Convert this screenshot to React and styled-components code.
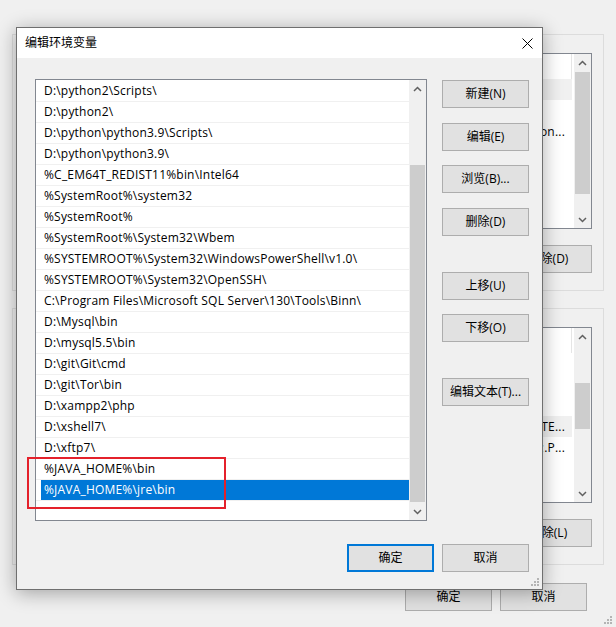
import React from 'react';
import styled, { createGlobalStyle } from 'styled-components';

const FONT = `"Open Sans", "Noto Sans CJK SC", sans-serif`;

const GlobalStyle = createGlobalStyle`
  html, body { margin: 0; padding: 0; }
  body { background: #f0f0f0; font-family: ${FONT}; font-size: 12px; color: #000; }
  * { box-sizing: border-box; }
`;

const Desktop = styled.div`
  position: relative;
  width: 616px;
  height: 627px;
  overflow: hidden;
  background: #f0f0f0;
`;

/* ---------- background window ---------- */
const BackWindow = styled.div`
  display: flex;
  flex-direction: column;
  height: 100%;
  padding: 34px 12px 0 12px;
`;

const Group = styled.div`
  height: 257px;
  border: 1px solid #dcdcdc;
  display: flex;
  flex-direction: column;
  align-items: flex-end;
  padding: 18px 11px 0 0;
  & + & { margin-top: 17px; }
`;

const ListBox = styled.div`
  display: flex;
  width: ${p => p.$w}px;
  height: ${p => p.$h}px;
  border: 1px solid #828790;
  background: #fff;
`;

const BackCols = styled.div`
  flex: 1;
  display: flex;
  flex-direction: column;
  min-width: 0;
`;

const BackHeader = styled.div`
  height: 25px;
  background: #fff;
  margin-right: 2px;
  border-right: 1px solid #e5e5e5;
`;

const BackRow = styled.div`
  height: 21px;
  line-height: 21px;
  padding-right: 7px;
  margin-right: 2px;
  text-align: right;
  white-space: nowrap;
  overflow: hidden;
  letter-spacing: 0.2px;
  background: ${p => (p.$sel ? '#f0f0f0' : '#fff')};
`;

const Button = styled.div`
  width: 87px;
  height: 28px;
  border: ${p => (p.$def ? '2px solid #0078d7' : '1px solid #adadad')};
  background: #e1e1e1;
  display: flex;
  align-items: center;
  justify-content: center;
  font-size: 12px;
  line-height: 1;
  flex-shrink: 0;
  margin-top: ${p => p.$mt || 0}px;
`;

const Footer = styled.div`
  display: flex;
  justify-content: flex-end;
  gap: 8px;
  padding: ${p => p.$pad};
`;

/* ---------- scrollbar ---------- */
const ScrollBar = styled.div`
  width: 17px;
  flex-shrink: 0;
  background: #f0f0f0;
  display: flex;
  flex-direction: column;
`;

const Arrow = styled.div`
  height: 17px;
  display: flex;
  align-items: center;
  justify-content: center;
  flex-shrink: 0;
`;

const Track = styled.div`
  flex: 1;
  display: flex;
  flex-direction: column;
`;

const Thumb = styled.div`
  margin: ${p => p.$top}px 1px 0 1px;
  height: ${p => p.$size}px;
  background: #cdcdcd;
`;

const Chevron = ({ down }) => (
  <svg width="9" height="6" viewBox="0 0 9 6">
    <path
      d={down ? 'M1 1 L4.5 4.5 L8 1' : 'M1 5 L4.5 1.5 L8 5'}
      fill="none"
      stroke="#606060"
      strokeWidth="1.5"
    />
  </svg>
);

const Scroll = ({ top, size }) => (
  <ScrollBar>
    <Arrow><Chevron /></Arrow>
    <Track><Thumb $top={top} $size={size} /></Track>
    <Arrow><Chevron down /></Arrow>
  </ScrollBar>
);

/* ---------- foreground dialog ---------- */
const Dialog = styled.div`
  position: absolute;
  left: 16px;
  top: 27px;
  width: 527px;
  height: 563px;
  border: 1px solid #6f6f6f;
  background: #f0f0f0;
  box-shadow: 0 3px 18px rgba(0, 0, 0, 0.33);
  display: flex;
  flex-direction: column;
`;

const TitleBar = styled.div`
  height: 30px;
  flex-shrink: 0;
  background: #fff;
  display: flex;
  align-items: center;
  justify-content: space-between;
  padding: 0 9px 0 8px;
`;

const Title = styled.span`
  font-size: 12px;
  line-height: 1;
`;

const Body = styled.div`
  display: flex;
  gap: 15px;
  padding: 21px 13px 0 18px;
`;

const Rows = styled.div`
  flex: 1;
  padding-top: 1px;
  min-width: 0;
`;

const Row = styled.div`
  height: 21px;
  line-height: 20px;
  border-bottom: 1px solid #f0f0f0;
  padding-left: 8px;
  white-space: nowrap;
  overflow: hidden;
  letter-spacing: 0.2px;
  color: ${p => (p.$sel ? '#fff' : '#000')};
  background: ${p => (p.$sel ? 'linear-gradient(to right, transparent 5px, #0078d7 5px)' : 'transparent')};
`;

const ButtonColumn = styled.div`
  display: flex;
  flex-direction: column;
  padding-top: 1px;
`;

const Marker = styled.div`
  position: absolute;
  left: 10px;
  top: 429px;
  width: 199px;
  height: 52px;
  border: 2px solid #e4212b;
  pointer-events: none;
`;

const GripBox = styled.div`
  position: absolute;
  right: ${p => p.$r}px;
  bottom: ${p => p.$b}px;
  width: 8px;
  height: 8px;
  line-height: 0;
`;

const Grip = ({ r, b }) => (
  <GripBox $r={r} $b={b}>
    <svg width="8" height="8" viewBox="0 0 8 8" fill="#b4b4b4">
      <rect x="6" y="0" width="2" height="2" />
      <rect x="3" y="3" width="2" height="2" />
      <rect x="6" y="3" width="2" height="2" />
      <rect x="0" y="6" width="2" height="2" />
      <rect x="3" y="6" width="2" height="2" />
      <rect x="6" y="6" width="2" height="2" />
    </svg>
  </GripBox>
);

const CloseIcon = () => (
  <svg width="11" height="11" viewBox="0 0 11 11">
    <path d="M0.5 0.5 L10.5 10.5 M10.5 0.5 L0.5 10.5" stroke="#000" strokeWidth="1" fill="none" />
  </svg>
);

const paths = [
  'D:\\python2\\Scripts\\',
  'D:\\python2\\',
  'D:\\python\\python3.9\\Scripts\\',
  'D:\\python\\python3.9\\',
  '%C_EM64T_REDIST11%bin\\Intel64',
  '%SystemRoot%\\system32',
  '%SystemRoot%',
  '%SystemRoot%\\System32\\Wbem',
  '%SYSTEMROOT%\\System32\\WindowsPowerShell\\v1.0\\',
  '%SYSTEMROOT%\\System32\\OpenSSH\\',
  'C:\\Program Files\\Microsoft SQL Server\\130\\Tools\\Binn\\',
  'D:\\Mysql\\bin',
  'D:\\mysql5.5\\bin',
  'D:\\git\\Git\\cmd',
  'D:\\git\\Tor\\bin',
  'D:\\xampp2\\php',
  'D:\\xshell7\\',
  'D:\\xftp7\\',
  '%JAVA_HOME%\\bin',
  '%JAVA_HOME%\\jre\\bin',
];

const userVars = [
  { v: '', sel: true },
  { v: '' },
  { v: 'D:\\python\\python3.9;C:\\Users\\Administrator\\AppData\\Local\\Programs\\Pyth on...' },
];

const sysVars = [
  { v: '' },
  { v: '' },
  { v: '' },
  { v: 'C:\\Windows\\System32\\Drivers\\DriverData;C:\\Windows\\Temp\\ROUTE...', sel: true },
  { v: '.COM;.EXE;.BAT;.CMD;.VBS;.VBE;.JS;.JSE;.WSF;.WSH;.MSC;.PY;.P...' },
];

export default function App() {
  return (
    <Desktop>
      <GlobalStyle />
      <BackWindow>
        <Group>
          <ListBox $w={560} $h={176}>
            <BackCols>
              <BackHeader />
              {userVars.map((r, i) => (
                <BackRow key={i} $sel={r.sel}>{r.v}</BackRow>
              ))}
            </BackCols>
            <Scroll top={1} size={122} />
          </ListBox>
          <Button $mt={16}>删除(D)</Button>
        </Group>
        <Group>
          <ListBox $w={560} $h={176}>
            <BackCols>
              <BackHeader />
              {sysVars.map((r, i) => (
                <BackRow key={i} $sel={r.sel}>{r.v}</BackRow>
              ))}
            </BackCols>
            <Scroll top={38} size={46} />
          </ListBox>
          <Button $mt={16}>删除(L)</Button>
        </Group>
        <Footer $pad="18px 17px 0 0">
          <Button>确定</Button>
          <Button>取消</Button>
        </Footer>
      </BackWindow>
      <Grip r={4} b={3} />

      <Dialog>
        <TitleBar>
          <Title>编辑环境变量</Title>
          <CloseIcon />
        </TitleBar>
        <Body>
          <ListBox $w={392} $h={442}>
            <Rows>
              {paths.map((p, i) => (
                <Row key={i} $sel={i === paths.length - 1}>{p}</Row>
              ))}
            </Rows>
            <Scroll top={68} size={337} />
          </ListBox>
          <ButtonColumn>
            <Button>新建(N)</Button>
            <Button $mt={15}>编辑(E)</Button>
            <Button $mt={14}>浏览(B)...</Button>
            <Button $mt={15}>删除(D)</Button>
            <Button $mt={36}>上移(U)</Button>
            <Button $mt={14}>下移(O)</Button>
            <Button $mt={36}>编辑文本(T)...</Button>
          </ButtonColumn>
        </Body>
        <Footer $pad="23px 13px 0 0">
          <Button $def>确定</Button>
          <Button>取消</Button>
        </Footer>
        <Marker />
        <Grip r={3} b={3} />
      </Dialog>
    </Desktop>
  );
}
